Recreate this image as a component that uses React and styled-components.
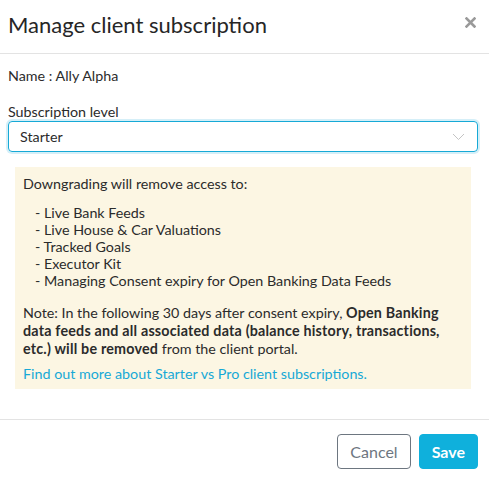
import React from 'react';
import styled, { createGlobalStyle } from 'styled-components';

const GlobalStyle = createGlobalStyle`
    html, body {
        margin: 0;
        padding: 0;
        background: #ffffff;
    }
    body {
        font-family: 'Lato', 'Noto Sans', sans-serif;
        color: #2b2b2b;
    }
`

const features = [
    'Live Bank Feeds',
    'Live House & Car Valuations',
    'Tracked Goals',
    'Executor Kit',
    'Managing Consent expiry for Open Banking Data Feeds',
];

const App = () => {
    return (
        <>
            <GlobalStyle />
            <Modal>
                <Header>
                    <Title>Manage client subscription</Title>
                    <CloseButton aria-label="Close">
                        <svg width="11" height="11" viewBox="0 0 11 11">
                            <path d="M1.5 1.5 L9.5 9.5 M9.5 1.5 L1.5 9.5" stroke="#9a9a9a" strokeWidth="2.6" strokeLinecap="square" />
                        </svg>
                    </CloseButton>
                </Header>

                <Body>
                    <NameLine>Name : Ally Alpha</NameLine>

                    <Field>
                        <Label>Subscription level</Label>
                        <Select>
                            <span>Starter</span>
                            <svg width="13" height="8" viewBox="0 0 13 8">
                                <path d="M1 1 L6.5 6.5 L12 1" fill="none" stroke="#c4c4c4" strokeWidth="1" />
                            </svg>
                        </Select>
                    </Field>

                    <Warning>
                        <Para>Downgrading will remove access to:</Para>
                        <List>
                            {features.map((f) => (
                                <li key={f}>- {f}</li>
                            ))}
                        </List>
                        <Note>
                            Note: In the following 30 days after consent expiry, <b>Open Banking data feeds and all associated data (balance history, transactions, etc.) will be removed</b> from the client portal.
                        </Note>
                        <Link href="#">Find out more about Starter vs Pro client subscriptions.</Link>
                    </Warning>
                </Body>

                <Footer>
                    <Button>Cancel</Button>
                    <Button primary>Save</Button>
                </Footer>
            </Modal>
        </>
    )
}

const Modal = styled.div`
    width: 489px;
    height: 480px;
    background: #ffffff;
    display: flex;
    flex-direction: column;
    box-sizing: border-box;
`

const Header = styled.div`
    display: flex;
    align-items: flex-start;
    justify-content: space-between;
    height: 54px;
    box-sizing: border-box;
    padding: 11px 13px 0 8px;
    border-bottom: 1px solid #e3e3e3;
`

const Title = styled.h4`
    margin: 0;
    font-size: 22px;
    font-weight: 400;
    color: #262626;
    line-height: 28px;
`

const CloseButton = styled.button`
    border: none;
    background: none;
    padding: 0;
    margin-top: 6px;
    cursor: pointer;
    line-height: 0;
`

const Body = styled.div`
    flex: 1;
    padding: 13px 11px 0 8px;
    display: flex;
    flex-direction: column;
`

const NameLine = styled.div`
    font-size: 14.3px;
    line-height: 18px;
    color: #2b2b2b;
`

const Field = styled.div`
    margin-top: 18px;
    display: flex;
    flex-direction: column;
`

const Label = styled.label`
    font-size: 14.3px;
    line-height: 18px;
    color: #2b2b2b;
`

const Select = styled.div`
    height: 31px;
    box-sizing: border-box;
    border: 1px solid #16a9d6;
    border-radius: 4px;
    box-shadow: 0 0 0 2px rgba(22, 169, 214, 0.18);
    display: flex;
    align-items: center;
    justify-content: space-between;
    padding: 0 12px 0 11px;
    font-size: 14.3px;
    color: #2b2b2b;
`

const Warning = styled.div`
    margin: 15px 7px 0 7px;
    background: #fcf6e3;
    padding: 8px 8px 6px 8px;
    font-size: 14.3px;
    color: #2b2b2b;
`

const Para = styled.p`
    margin: 0;
    line-height: 18px;
`

const List = styled.ul`
    list-style: none;
    margin: 11px 0 15px 0;
    padding: 0 0 0 12px;
    line-height: 17px;
`

const Note = styled.p`
    margin: 0;
    line-height: 18px;

    b {
        font-weight: 700;
        letter-spacing: 0.2px;
    }
`

const Link = styled.a`
    display: block;
    margin-top: 7px;
    line-height: 18px;
    color: #17a9d6;
    text-decoration: none;
`

const Footer = styled.div`
    height: 61px;
    box-sizing: border-box;
    border-top: 1px solid #e3e3e3;
    display: flex;
    justify-content: flex-end;
    align-items: flex-start;
    gap: 8px;
    padding: 14px 11px 0 0;
`

const Button = styled.button`
    height: 35px;
    padding: 0 12px;
    border-radius: 4px;
    font-family: 'Lato', 'Noto Sans', sans-serif;
    font-size: 16px;
    cursor: pointer;
    border: 1px solid ${(p) => (p.primary ? '#0fb0dc' : '#6d7680')};
    background: ${(p) => (p.primary ? '#0fb0dc' : '#ffffff')};
    color: ${(p) => (p.primary ? '#ffffff' : '#6d7680')};
    font-weight: ${(p) => (p.primary ? 700 : 400)};
`

export default App;
